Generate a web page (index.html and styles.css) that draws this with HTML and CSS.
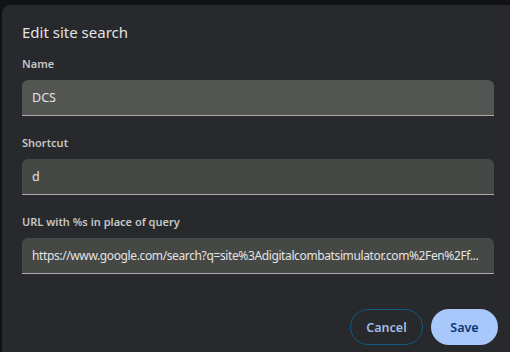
FILE: index.html
```html
<!DOCTYPE html>
<html lang="en">
<head>
<meta charset="utf-8">
<title>Edit site search</title>
<link rel="stylesheet" href="styles.css">
</head>
<body>
<div class="dialog">
  <h1 class="title">Edit site search</h1>
  <div class="field">
    <div class="label">Name</div>
    <div class="input hover">DCS</div>
  </div>
  <div class="field">
    <div class="label">Shortcut</div>
    <div class="input">d</div>
  </div>
  <div class="field">
    <div class="label">URL with %s in place of query</div>
    <div class="input url">https://www.google.com/search?q=site%3Adigitalcombatsimulator.com%2Fen%2Ff...</div>
  </div>
  <div class="actions">
    <button class="btn cancel">Cancel</button>
    <button class="btn save">Save</button>
  </div>
</div>
</body>
</html>
```

FILE: styles.css
```css
html, body {
  margin: 0;
  padding: 0;
  background: #111214;
  overflow: hidden;
  width: 510px;
  height: 352px;
}

body {
  font-family: "Noto Sans", "Open Sans", sans-serif;
  color: #e3e3e3;
}

.dialog {
  box-sizing: border-box;
  margin: 5px 0 0 2px;
  width: 508px;
  height: 347px;
  padding: 17px 16px 0 20px;
  background: #28292c;
  border-radius: 8px 0 0 0;
}

.title {
  margin: 0;
  font-size: 15px;
  line-height: 20px;
  font-weight: 400;
  color: #e3e3e3;
}

.field {
  margin-top: 14px;
}

.field + .field {
  margin-top: 19px;
}

.label {
  font-size: 11px;
  line-height: 16px;
  font-weight: 600;
  color: #c4c7c5;
  margin-bottom: 8px;
}

.input {
  height: 35px;
  line-height: 35px;
  background: #464846;
  border-bottom: 1px solid #a9aaa9;
  border-radius: 6px 6px 0 0;
  padding: 0 6px 0 10px;
  font-size: 12.5px;
  color: #e3e3e3;
  white-space: nowrap;
  overflow: hidden;
  text-overflow: ellipsis;
}

.input.url {
  font-size: 12px;
  letter-spacing: -0.38px;
}

.input.hover {
  background: #535553;
}

.actions {
  display: flex;
  justify-content: flex-end;
  gap: 8px;
  margin-top: 35px;
  margin-right: -4px;
}

.btn {
  height: 36px;
  border-radius: 18px;
  font-family: inherit;
  font-size: 12.5px;
  font-weight: 600;
  cursor: pointer;
}

.cancel {
  background: transparent;
  border: 1px solid #0f5d83;
  color: #a2bde6;
  width: 73px;
  padding: 0;
}

.save {
  background: #a8c7fa;
  border: none;
  color: #0a3673;
  width: 67px;
  padding: 0;
}
```
